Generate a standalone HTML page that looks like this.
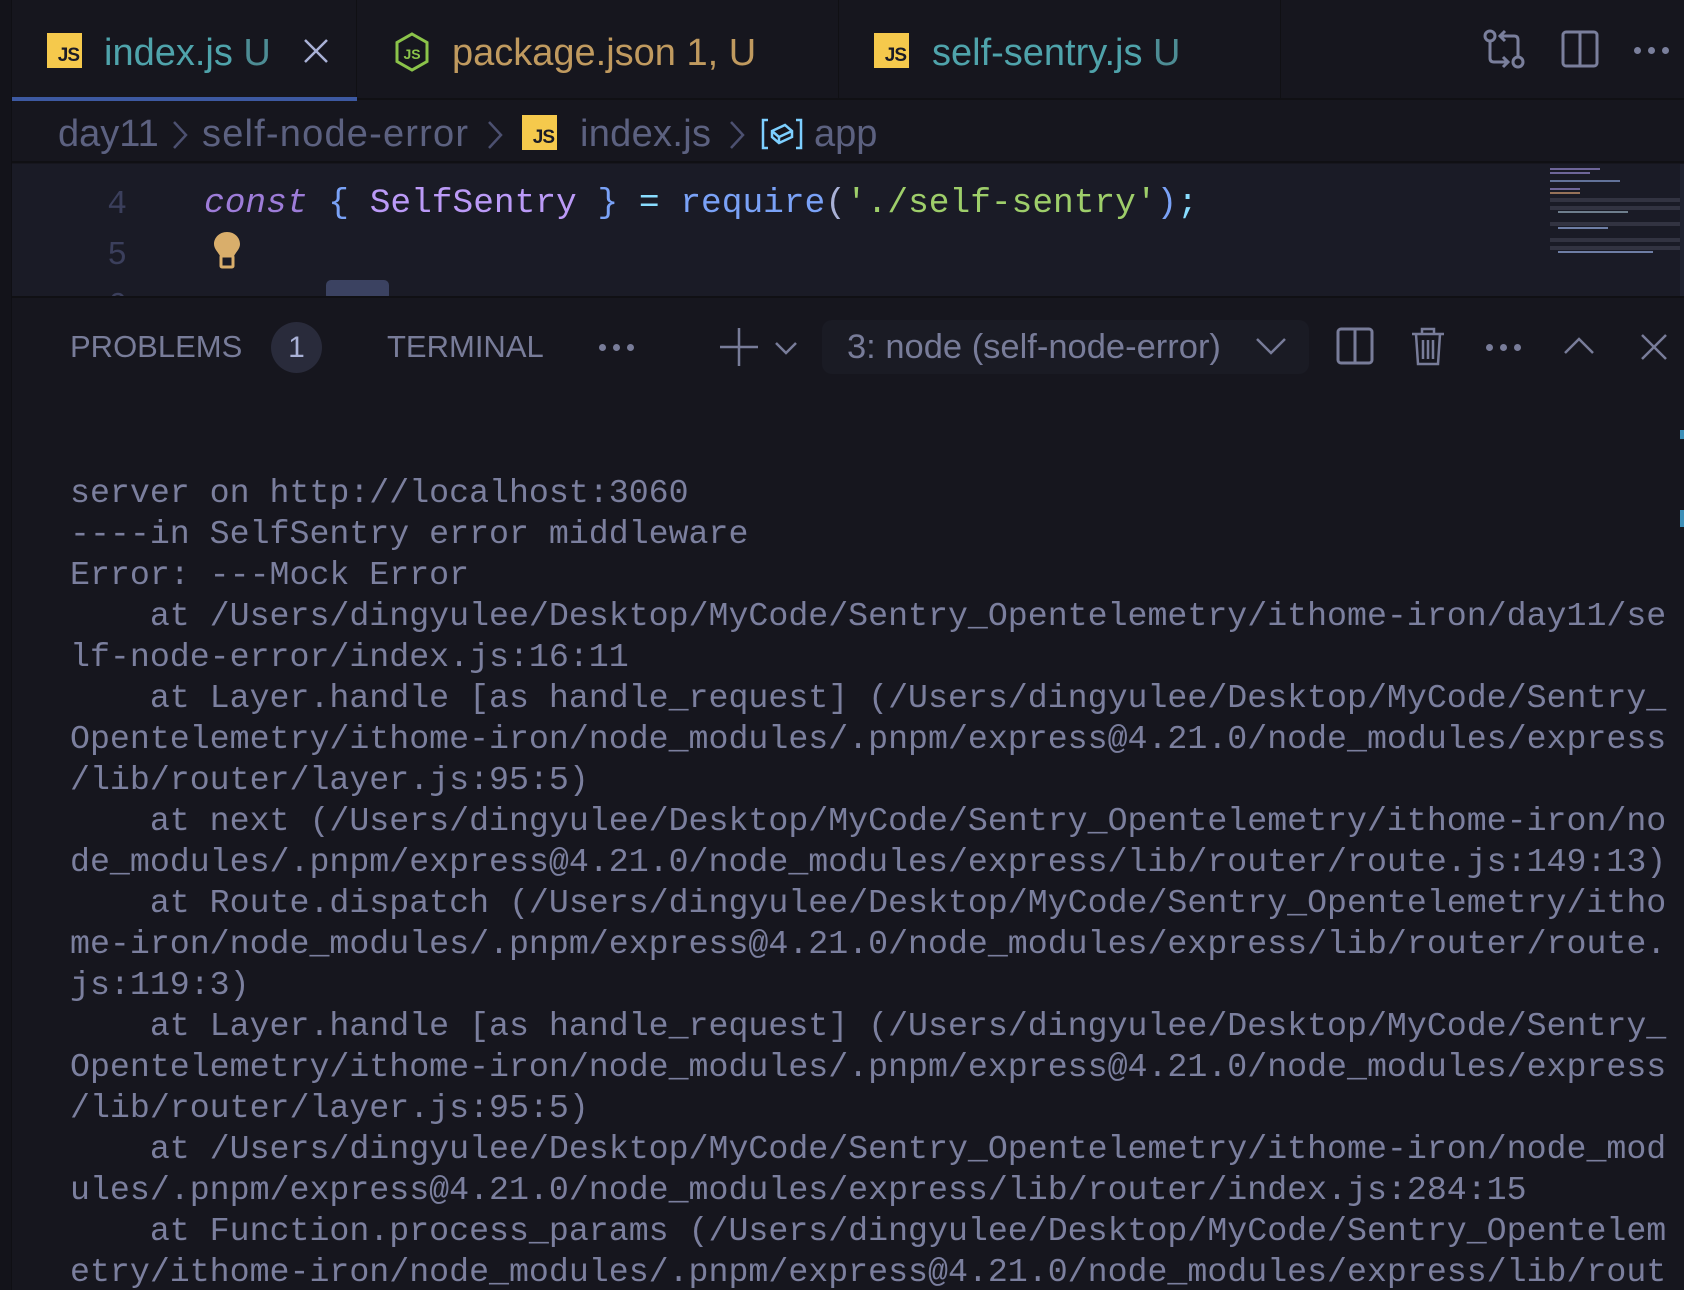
<!DOCTYPE html>
<html><head><meta charset="utf-8">
<style>
*{margin:0;padding:0;box-sizing:border-box}
html,body{width:1684px;height:1290px;overflow:hidden;background:#16161e}
body{position:relative;font-family:"Liberation Sans",sans-serif}
.a{position:absolute;white-space:pre}
.js{position:absolute;background:#f5c94c;color:#1a1b26;font:bold 19px "Liberation Sans",sans-serif;display:flex;align-items:flex-end;justify-content:flex-end;padding:0 3px 1px 0;letter-spacing:-1px}
.mono{font-family:"Liberation Mono",monospace}
.bc{position:absolute;top:113px;font-size:38px;color:#5c6180;white-space:pre}
</style></head><body>
<!-- left strip -->
<div class="a" style="left:0;top:0;width:12px;height:1290px;background:#13131a;border-right:1px solid #0f0f14"></div>
<!-- tab bar -->
<div class="a" style="left:12px;top:0;width:1672px;height:100px;background:#16161e;border-bottom:2px solid #101014"></div>
<div class="a" style="left:12px;top:0;width:345px;height:100px;background:#16161e;border-right:1px solid #101014"></div>
<div class="a" style="left:12px;top:97px;width:345px;height:4px;background:#3d59a1"></div>
<div class="a" style="left:838px;top:0;width:1px;height:98px;background:#101014"></div>
<div class="a" style="left:1280px;top:0;width:1px;height:98px;background:#101014"></div>
<div class="js" style="left:47px;top:33px;width:35px;height:35px">JS</div>
<div class="a" style="left:104px;top:32px;font-size:38px;color:#4fa3ab">index.js <span style="color:#4d8c94">U</span></div>
<svg class="a" style="left:303px;top:38px" width="26" height="26" viewBox="0 0 26 26"><path d="M2 2L24 24M24 2L2 24" stroke="#a9b1d6" stroke-width="2.5"/></svg>
<svg class="a" style="left:393px;top:31px" width="38" height="42" viewBox="0 0 38 42"><path d="M19 3L34 11.5V30.5L19 39L4 30.5V11.5Z" fill="none" stroke="#8bc34a" stroke-width="3"/><text x="19" y="28" font-family="Liberation Sans" font-size="14" font-weight="bold" fill="#8bc34a" text-anchor="middle">JS</text></svg>
<div class="a" style="left:452px;top:32px;font-size:38px;color:#c09a5f">package.json 1, U</div>
<div class="js" style="left:874px;top:33px;width:35px;height:35px">JS</div>
<div class="a" style="left:932px;top:32px;font-size:38px;color:#4fa3ab">self-sentry.js <span style="color:#4d8c94">U</span></div>
<!-- top right icons -->
<svg class="a" style="left:1482px;top:28px" width="44" height="42" viewBox="0 0 44 42" fill="none" stroke="#7a7f9c" stroke-width="3"><circle cx="8" cy="8" r="5"/><circle cx="36" cy="34" r="5"/><path d="M8 13V30Q8 34 12 34H26M21 29L26 34L21 39"/><path d="M36 29V12Q36 8 32 8H18M23 3L18 8L23 13"/></svg>
<svg class="a" style="left:1561px;top:30px" width="38" height="38" viewBox="0 0 38 38" fill="none" stroke="#7a7f9c" stroke-width="3"><rect x="2" y="2" width="34" height="34" rx="3"/><path d="M19 2V36"/></svg>
<div class="a" style="left:1634px;top:47px;width:40px;height:10px"><span style="position:absolute;left:0;width:7px;height:7px;border-radius:50%;background:#7a7f9c"></span><span style="position:absolute;left:14px;width:7px;height:7px;border-radius:50%;background:#7a7f9c"></span><span style="position:absolute;left:28px;width:7px;height:7px;border-radius:50%;background:#7a7f9c"></span></div>
<!-- breadcrumb -->
<div class="a" style="left:12px;top:101px;width:1672px;height:62px;background:#16161e;border-bottom:2px solid #101014"></div>
<div class="bc" style="left:58px">day11</div>
<svg class="a" style="left:172px;top:120px" width="16" height="30" viewBox="0 0 16 30" fill="none" stroke="#4c5070" stroke-width="2.5"><path d="M2 2L14 15L2 28"/></svg>
<div class="bc" style="left:202px;letter-spacing:1.2px">self-node-error</div>
<svg class="a" style="left:487px;top:120px" width="16" height="30" viewBox="0 0 16 30" fill="none" stroke="#4c5070" stroke-width="2.5"><path d="M2 2L14 15L2 28"/></svg>
<div class="js" style="left:522px;top:115px;width:35px;height:35px">JS</div>
<div class="bc" style="left:580px;letter-spacing:0.3px">index.js</div>
<svg class="a" style="left:729px;top:120px" width="16" height="30" viewBox="0 0 16 30" fill="none" stroke="#4c5070" stroke-width="2.5"><path d="M2 2L14 15L2 28"/></svg>
<svg class="a" style="left:761px;top:118px" width="42" height="32" viewBox="0 0 42 32" fill="none" stroke="#7dcfff" stroke-width="2.5"><path d="M7 2H2V30H7M35 2H40V30H35"/><path d="M11 13L24 7L31 13V19L18 25L11 19Z M11 13L18 19L31 13 M18 19V25"/></svg>
<div class="bc" style="left:814px">app</div>
<!-- editor -->
<div class="a" style="left:12px;top:164px;width:1672px;height:132px;background:#1a1b26;overflow:hidden">
 <div class="a mono" style="left:93px;top:22px;font-size:33px;color:#3b3f5c;width:22px;text-align:right">4</div>
 <div class="a mono" style="left:93px;top:73px;font-size:33px;color:#3b3f5c;width:22px;text-align:right">5</div>
 <div class="a mono" style="left:93px;top:124px;font-size:33px;color:#3b3f5c;width:22px;text-align:right">6</div>
 <div class="a mono" style="left:192px;top:20px;font-size:34.5px;color:#c0caf5"><span style="color:#9d7cd8;font-style:italic">const</span> <span style="color:#7aa2f7">{</span> <span style="color:#bb9af7">SelfSentry</span> <span style="color:#7aa2f7">}</span> <span style="color:#89ddff">=</span> <span style="color:#7aa2f7">require</span><span style="color:#a9b1d6">(</span><span style="color:#9ece6a">'./self-sentry'</span><span style="color:#7aa2f7">)</span><span style="color:#89ddff">;</span></div>
 <svg class="a" style="left:201px;top:67px" width="28" height="38" viewBox="0 0 28 38"><path d="M14 1C6 1 1 7 1 13C1 18 5 21 7 25H21C23 21 27 18 27 13C27 7 22 1 14 1Z" fill="#d9ae6b"/><rect x="8" y="25" width="12" height="11" rx="1" fill="none" stroke="#d9ae6b" stroke-width="3"/></svg>
 <div class="a" style="left:314px;top:116px;width:63px;height:20px;background:#3b4261;border-radius:5px"></div>
 <!-- minimap -->
 <div class="a" style="left:1526px;top:2px;width:146px;height:90px;opacity:.75">
  <div class="a" style="left:12px;top:2px;width:50px;height:2px;background:#8a7fc0"></div>
  <div class="a" style="left:12px;top:6px;width:40px;height:2px;background:#8a7fc0"></div>
  <div class="a" style="left:12px;top:14px;width:70px;height:2px;background:#7a8fc0"></div>
  <div class="a" style="left:12px;top:22px;width:30px;height:2px;background:#8a7fc0"></div>
  <div class="a" style="left:12px;top:26px;width:30px;height:2px;background:#c0906a"></div>
  <div class="a" style="left:12px;top:32px;width:142px;height:4px;background:#3a3c4a"></div>
  <div class="a" style="left:12px;top:40px;width:142px;height:4px;background:#3a3c4a"></div>
  <div class="a" style="left:20px;top:45px;width:70px;height:2px;background:#8aa0b0"></div>
  <div class="a" style="left:12px;top:56px;width:142px;height:4px;background:#3a3c4a"></div>
  <div class="a" style="left:20px;top:61px;width:50px;height:2px;background:#8a9fd0"></div>
  <div class="a" style="left:12px;top:72px;width:142px;height:4px;background:#3a3c4a"></div>
  <div class="a" style="left:12px;top:80px;width:142px;height:4px;background:#3a3c4a"></div>
  <div class="a" style="left:20px;top:85px;width:95px;height:2px;background:#8a9fd0"></div>
 </div>
 <div class="a" style="left:1668px;top:0;width:4px;height:132px;background:#202230"></div>
</div>
<!-- panel -->
<div class="a" style="left:12px;top:296px;width:1672px;height:994px;background:#16161e;border-top:2px solid #101014"></div>
<div class="a" style="left:70px;top:329px;font-size:31px;color:#787c99">PROBLEMS</div>
<div class="a" style="left:271px;top:322px;width:51px;height:51px;border-radius:50%;background:#292b3b;color:#a9b1d6;font-size:30px;text-align:center;line-height:51px">1</div>
<div class="a" style="left:387px;top:329px;font-size:31px;color:#787c99">TERMINAL</div>
<div class="a" style="left:599px;top:344px;width:40px;height:8px"><span style="position:absolute;left:0;width:7px;height:7px;border-radius:50%;background:#787c99"></span><span style="position:absolute;left:14px;width:7px;height:7px;border-radius:50%;background:#787c99"></span><span style="position:absolute;left:28px;width:7px;height:7px;border-radius:50%;background:#787c99"></span></div>
<svg class="a" style="left:720px;top:327px" width="80" height="40" viewBox="0 0 80 40" fill="none" stroke="#787c99" stroke-width="2.5"><path d="M19 1V39M0 20H38"/><path d="M56 16L66 26L76 16"/></svg>
<div class="a" style="left:822px;top:320px;width:487px;height:54px;background:#1a1b24;border-radius:10px"></div>
<div class="a" style="left:847px;top:328px;font-size:34.5px;color:#787c99">3: node (self-node-error)</div>
<svg class="a" style="left:1255px;top:336px" width="32" height="20" viewBox="0 0 32 20" fill="none" stroke="#787c99" stroke-width="2.5"><path d="M2 3L16 17L30 3"/></svg>
<svg class="a" style="left:1336px;top:327px" width="38" height="38" viewBox="0 0 38 38" fill="none" stroke="#787c99" stroke-width="3"><rect x="2" y="2" width="34" height="34" rx="3"/><path d="M19 2V36"/></svg>
<svg class="a" style="left:1411px;top:326px" width="34" height="40" viewBox="0 0 34 40" fill="none" stroke="#787c99" stroke-width="2.5"><path d="M1 8H33M11 8V3H23V8M5 8L7 38H27L29 8M12 14V33M17 14V33M22 14V33"/></svg>
<div class="a" style="left:1486px;top:344px;width:40px;height:8px"><span style="position:absolute;left:0;width:7px;height:7px;border-radius:50%;background:#787c99"></span><span style="position:absolute;left:14px;width:7px;height:7px;border-radius:50%;background:#787c99"></span><span style="position:absolute;left:28px;width:7px;height:7px;border-radius:50%;background:#787c99"></span></div>
<svg class="a" style="left:1563px;top:336px" width="32" height="20" viewBox="0 0 32 20" fill="none" stroke="#787c99" stroke-width="2.5"><path d="M2 17L16 3L30 17"/></svg>
<svg class="a" style="left:1641px;top:334px" width="26" height="26" viewBox="0 0 26 26" fill="none" stroke="#787c99" stroke-width="2.5"><path d="M1 1L25 25M25 1L1 25"/></svg>
<div class="a" style="left:1680px;top:430px;width:4px;height:9px;background:#3d8fb8"></div>
<div class="a" style="left:1680px;top:510px;width:4px;height:17px;background:#3d8fb8"></div>
<!-- terminal -->
<div class="a mono" style="left:70px;top:473px;font-size:33.25px;line-height:41px;color:#7b7f9e">server on http://localhost:3060
----in SelfSentry error middleware
Error: ---Mock Error
    at /Users/dingyulee/Desktop/MyCode/Sentry_Opentelemetry/ithome-iron/day11/se
lf-node-error/index.js:16:11
    at Layer.handle [as handle_request] (/Users/dingyulee/Desktop/MyCode/Sentry_
Opentelemetry/ithome-iron/node_modules/.pnpm/express@4.21.0/node_modules/express
/lib/router/layer.js:95:5)
    at next (/Users/dingyulee/Desktop/MyCode/Sentry_Opentelemetry/ithome-iron/no
de_modules/.pnpm/express@4.21.0/node_modules/express/lib/router/route.js:149:13)
    at Route.dispatch (/Users/dingyulee/Desktop/MyCode/Sentry_Opentelemetry/itho
me-iron/node_modules/.pnpm/express@4.21.0/node_modules/express/lib/router/route.
js:119:3)
    at Layer.handle [as handle_request] (/Users/dingyulee/Desktop/MyCode/Sentry_
Opentelemetry/ithome-iron/node_modules/.pnpm/express@4.21.0/node_modules/express
/lib/router/layer.js:95:5)
    at /Users/dingyulee/Desktop/MyCode/Sentry_Opentelemetry/ithome-iron/node_mod
ules/.pnpm/express@4.21.0/node_modules/express/lib/router/index.js:284:15
    at Function.process_params (/Users/dingyulee/Desktop/MyCode/Sentry_Opentelem
etry/ithome-iron/node_modules/.pnpm/express@4.21.0/node_modules/express/lib/rout</div>
</body></html>
